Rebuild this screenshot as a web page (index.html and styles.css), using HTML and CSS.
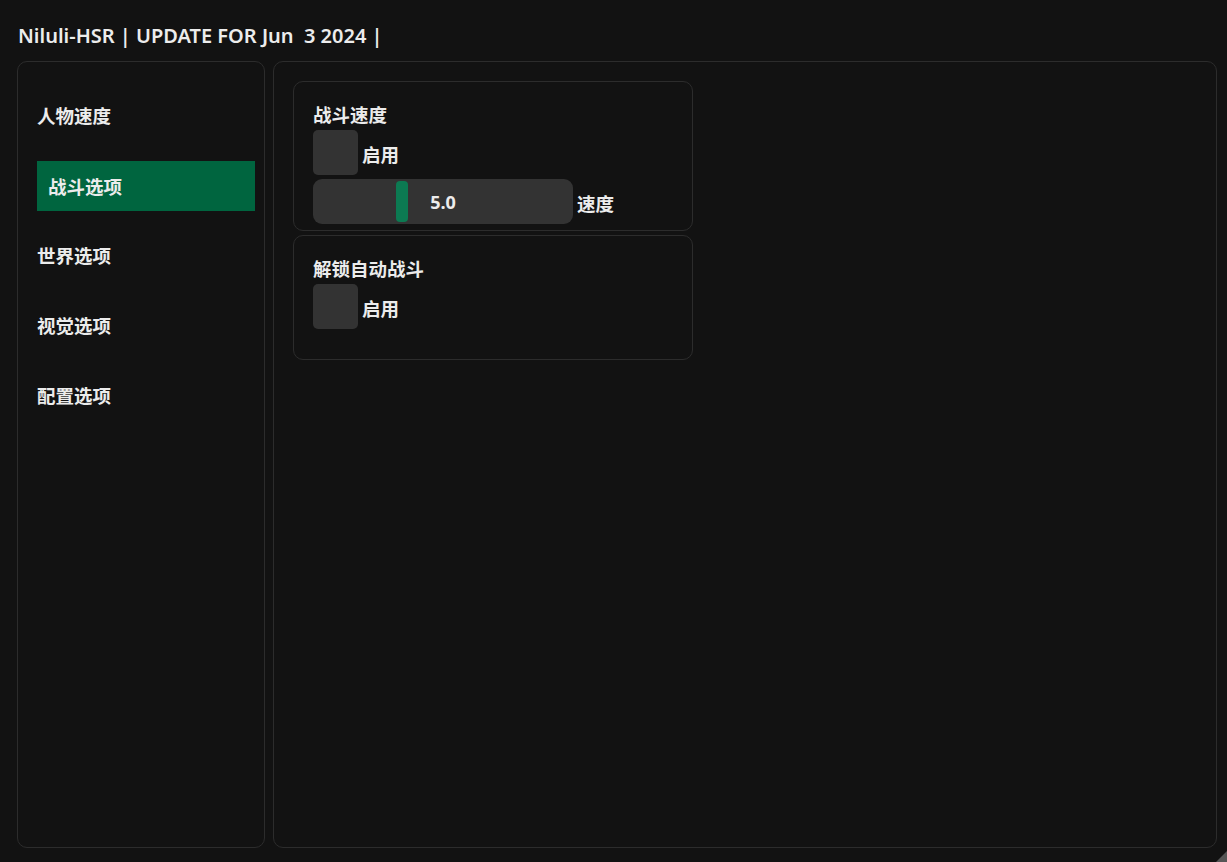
FILE: index.html
```html
<!DOCTYPE html>
<html lang="zh-CN">
<head>
  <meta charset="UTF-8">
  <title>Niluli-HSR</title>
  <link rel="stylesheet" href="styles.css">
</head>
<body>

  <div class="window">
    <div class="title">Niluli-HSR | UPDATE FOR Jun&nbsp;&nbsp;3 2024 |</div>

    <div class="main">
      <div class="sidebar">
        <div class="nav-item">人物速度</div>
        <div class="nav-item active">战斗选项</div>
        <div class="nav-item">世界选项</div>
        <div class="nav-item">视觉选项</div>
        <div class="nav-item">配置选项</div>
      </div>

      <div class="content">
        <div class="card">
          <div class="card-title">战斗速度</div>
          <div class="row">
            <div class="checkbox"></div>
            <span class="label">启用</span>
          </div>
          <div class="row">
            <div class="slider">
              <div class="grab" style="left: 83px"></div>
              <span class="value">5.0</span>
            </div>
            <span class="label">速度</span>
          </div>
        </div>

        <div class="card card-short">
          <div class="card-title">解锁自动战斗</div>
          <div class="row">
            <div class="checkbox"></div>
            <span class="label">启用</span>
          </div>
        </div>
      </div>
    </div>

    <div class="grip"></div>
  </div>

</body>
</html>
```

FILE: styles.css
```css
html, body {
  margin: 0;
  padding: 0;
  height: 100%;
  background: #121212;
  color: #ececec;
  font-family: "Noto Sans", "Noto Sans CJK SC", sans-serif;
}

.window {
  position: relative;
  height: 862px;
  box-sizing: border-box;
  padding: 0 10px 14px 17px;
  display: flex;
  flex-direction: column;
  overflow: hidden;
}

.title {
  height: 61px;
  line-height: 72px;
  padding-left: 1px;
  font-size: 20px;
  font-weight: 600;
  letter-spacing: 0;
  white-space: pre;
}

.main {
  flex: 1;
  display: flex;
  gap: 8px;
}

.sidebar {
  width: 248px;
  box-sizing: border-box;
  border: 1px solid #2c2c2c;
  border-radius: 10px;
  padding: 28px 9px 0 19px;
  display: flex;
  flex-direction: column;
  gap: 20px;
}

.nav-item {
  height: 50px;
  line-height: 50px;
  font-family: "Noto Sans CJK SC", sans-serif;
  font-size: 18.5px;
  font-weight: 700;
}

.nav-item.active {
  background: #00653f;
  padding-left: 11px;
  margin-top: 1px;
}

.nav-item.active + .nav-item {
  margin-top: -1px;
}

.content {
  flex: 1;
  border: 1px solid #2c2c2c;
  border-radius: 10px;
  padding: 19px;
  display: flex;
  flex-direction: column;
  gap: 4px;
}

.card {
  width: 400px;
  height: 150px;
  box-sizing: border-box;
  border: 1px solid #2c2c2c;
  border-radius: 10px;
  padding: 21px 19px 0;
  display: flex;
  flex-direction: column;
  gap: 4px;
}

.card-short {
  height: 125px;
}

.card-title {
  height: 23px;
  line-height: 23px;
  font-family: "Noto Sans CJK SC", sans-serif;
  font-size: 18.5px;
  font-weight: 700;
}

.row {
  display: flex;
  align-items: center;
  gap: 4px;
}

.checkbox {
  width: 45px;
  height: 45px;
  background: #333333;
  border-radius: 5px;
}

.label {
  font-family: "Noto Sans CJK SC", sans-serif;
  font-size: 18.5px;
  font-weight: 700;
  padding-top: 2px;
}

.slider {
  position: relative;
  width: 260px;
  height: 45px;
  background: #333333;
  border-radius: 9px;
  display: flex;
  align-items: center;
  justify-content: center;
}

.grab {
  position: absolute;
  top: 2px;
  width: 12px;
  height: 41px;
  background: #0c7a52;
  border-radius: 4px;
}

.value {
  font-family: "Open Sans", sans-serif;
  font-size: 18px;
  font-weight: 700;
}

.grip {
  position: absolute;
  right: 0;
  bottom: 0;
  width: 0;
  height: 0;
  border-left: 11px solid transparent;
  border-bottom: 11px solid #555555;
}
```
